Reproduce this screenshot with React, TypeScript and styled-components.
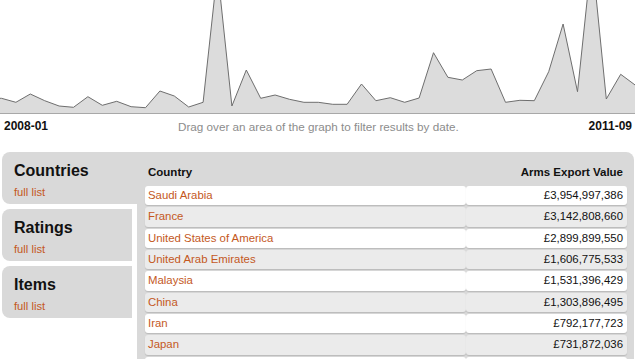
import React from "react";
import styled, { createGlobalStyle } from "styled-components";

const GlobalStyle = createGlobalStyle`
  body {
    margin: 0;
    background: #fff;
    font-family: "Liberation Sans", Arial, sans-serif;
    overflow: hidden;
  }
`

const Page = styled.div`
  width: 635px;
`

const Chart = styled.svg`
  display: block;
  width: 635px;
  height: 114px;
`

const Axis = styled.div`
  display: flex;
  justify-content: space-between;
  align-items: center;
  height: 14px;
  margin-top: 5px;
  padding: 0 3px 0 4px;
`

const DateLabel = styled.span`
  font-size: 12px;
  font-weight: bold;
  color: #111;
`

const Hint = styled.span`
  font-size: 11.7px;
  color: #8c8c8c;
`

const Layout = styled.div`
  display: flex;
  margin-top: 19px;
  padding-left: 2px;
`

const Sidebar = styled.div`
  width: 135px;
  display: flex;
  flex-direction: column;
  gap: 5px;
`

const Tab = styled.div<{ $active?: boolean }>`
  box-sizing: border-box;
  width: ${p => (p.$active ? "135px" : "130px")};
  height: 52px;
  padding: 10px 12px 0;
  background: #d9d9d9;
  border-radius: 8px 0 0 8px;
`

const TabTitle = styled.div`
  font-size: 16px;
  line-height: 18px;
  font-weight: bold;
  color: #111;
`

const TabLink = styled.a`
  display: block;
  margin-top: 6px;
  font-size: 11.2px;
  line-height: 13px;
  color: #c4581d;
  text-decoration: none;
`

const Panel = styled.div`
  width: 497px;
  height: 220px;
  box-sizing: border-box;
  padding: 0 7px 0 8px;
  background: #d9d9d9;
  border-radius: 0 8px 0 0;
`

const Header = styled.div`
  display: grid;
  grid-template-columns: 321px 161px;
  box-sizing: border-box;
  height: 34px;
  padding-top: 13px;
  font-size: 11.5px;
  line-height: 14px;
  font-weight: bold;
  color: #111;
`

const HeadCell = styled.div<{ $right?: boolean }>`
  padding: 0 4px 0 3px;
  text-align: ${p => (p.$right ? "right" : "left")};
`

const Rows = styled.div`
  display: flex;
  flex-direction: column;
  gap: 2px;
`

const Row = styled.div`
  display: grid;
  grid-template-columns: 321px 161px;
  height: 19.33px;
`

const Cell = styled.div<{ $alt?: boolean; $right?: boolean }>`
  padding: 0 4px 0 3px;
  background: ${p => (p.$alt ? "#ebebeb" : "#fff")};
  border-radius: 3px;
  box-shadow: 0 1px 1px rgba(0, 0, 0, 0.14);
  font-size: 11.4px;
  line-height: 19px;
  text-align: ${p => (p.$right ? "right" : "left")};
  color: ${p => (p.$right ? "#111" : "#c4581d")};
  white-space: nowrap;
`

const series = [
  98.3, 102.3, 94, 100.7, 106, 107.3, 96.7, 105.3, 101.3, 106.7, 107.7, 91, 96,
  107, 102.3, -30, 106, 70, 98.3, 95, 99.3, 102.3, 102.3, 104.3, 104.3, 84,
  100.7, 97.7, 102.3, 98, 52.7, 77.3, 80, 70.7, 69, 102.3, 100.3, 100.7, 71.7,
  24, 91.7, -45, 99, 74.3, 85,
]

// the ninth row only shows its top edge in the view
const exports = [
  ["Saudi Arabia", "£3,954,997,386"],
  ["France", "£3,142,808,660"],
  ["United States of America", "£2,899,899,550"],
  ["United Arab Emirates", "£1,606,775,533"],
  ["Malaysia", "£1,531,396,429"],
  ["China", "£1,303,896,495"],
  ["Iran", "£792,177,723"],
  ["Japan", "£731,872,036"],
  ["", ""],
]

const TimeChart = () => {
  const step = 633.6 / (series.length - 1)
  const pts = series.map((y, i) => `${(1.5 + i * step).toFixed(1)},${y}`)
  const line = `M0,${series[0]} L${pts.join(" L")}`
  const area = `${line} L635,113 L0,113 Z`
  return (
    <Chart viewBox="0 0 635 114">
      <path d={area} fill="#dcdcdc"/>
      <path d={line} fill="none" stroke="#6e6e6e" strokeWidth="1"/>
      <line x1="0" y1="113.5" x2="635" y2="113.5" stroke="#a8a8a8"/>
    </Chart>
  )
}

export default function App() {
  return (
    <Page>
      <GlobalStyle/>
      <TimeChart/>
      <Axis>
        <DateLabel>2008-01</DateLabel>
        <Hint>Drag over an area of the graph to filter results by date.</Hint>
        <DateLabel>2011-09</DateLabel>
      </Axis>
      <Layout>
        <Sidebar>
          <Tab $active>
            <TabTitle>Countries</TabTitle>
            <TabLink href="#">full list</TabLink>
          </Tab>
          <Tab>
            <TabTitle>Ratings</TabTitle>
            <TabLink href="#">full list</TabLink>
          </Tab>
          <Tab>
            <TabTitle>Items</TabTitle>
            <TabLink href="#">full list</TabLink>
          </Tab>
        </Sidebar>
        <Panel>
          <Header>
            <HeadCell>Country</HeadCell>
            <HeadCell $right>Arms Export Value</HeadCell>
          </Header>
          <Rows>
            {exports.map(([country, value], i) => (
              <Row key={i}>
                <Cell $alt={i % 2 === 1}>{country}</Cell>
                <Cell $alt={i % 2 === 1} $right>{value}</Cell>
              </Row>
            ))}
          </Rows>
        </Panel>
      </Layout>
    </Page>
  )
}
